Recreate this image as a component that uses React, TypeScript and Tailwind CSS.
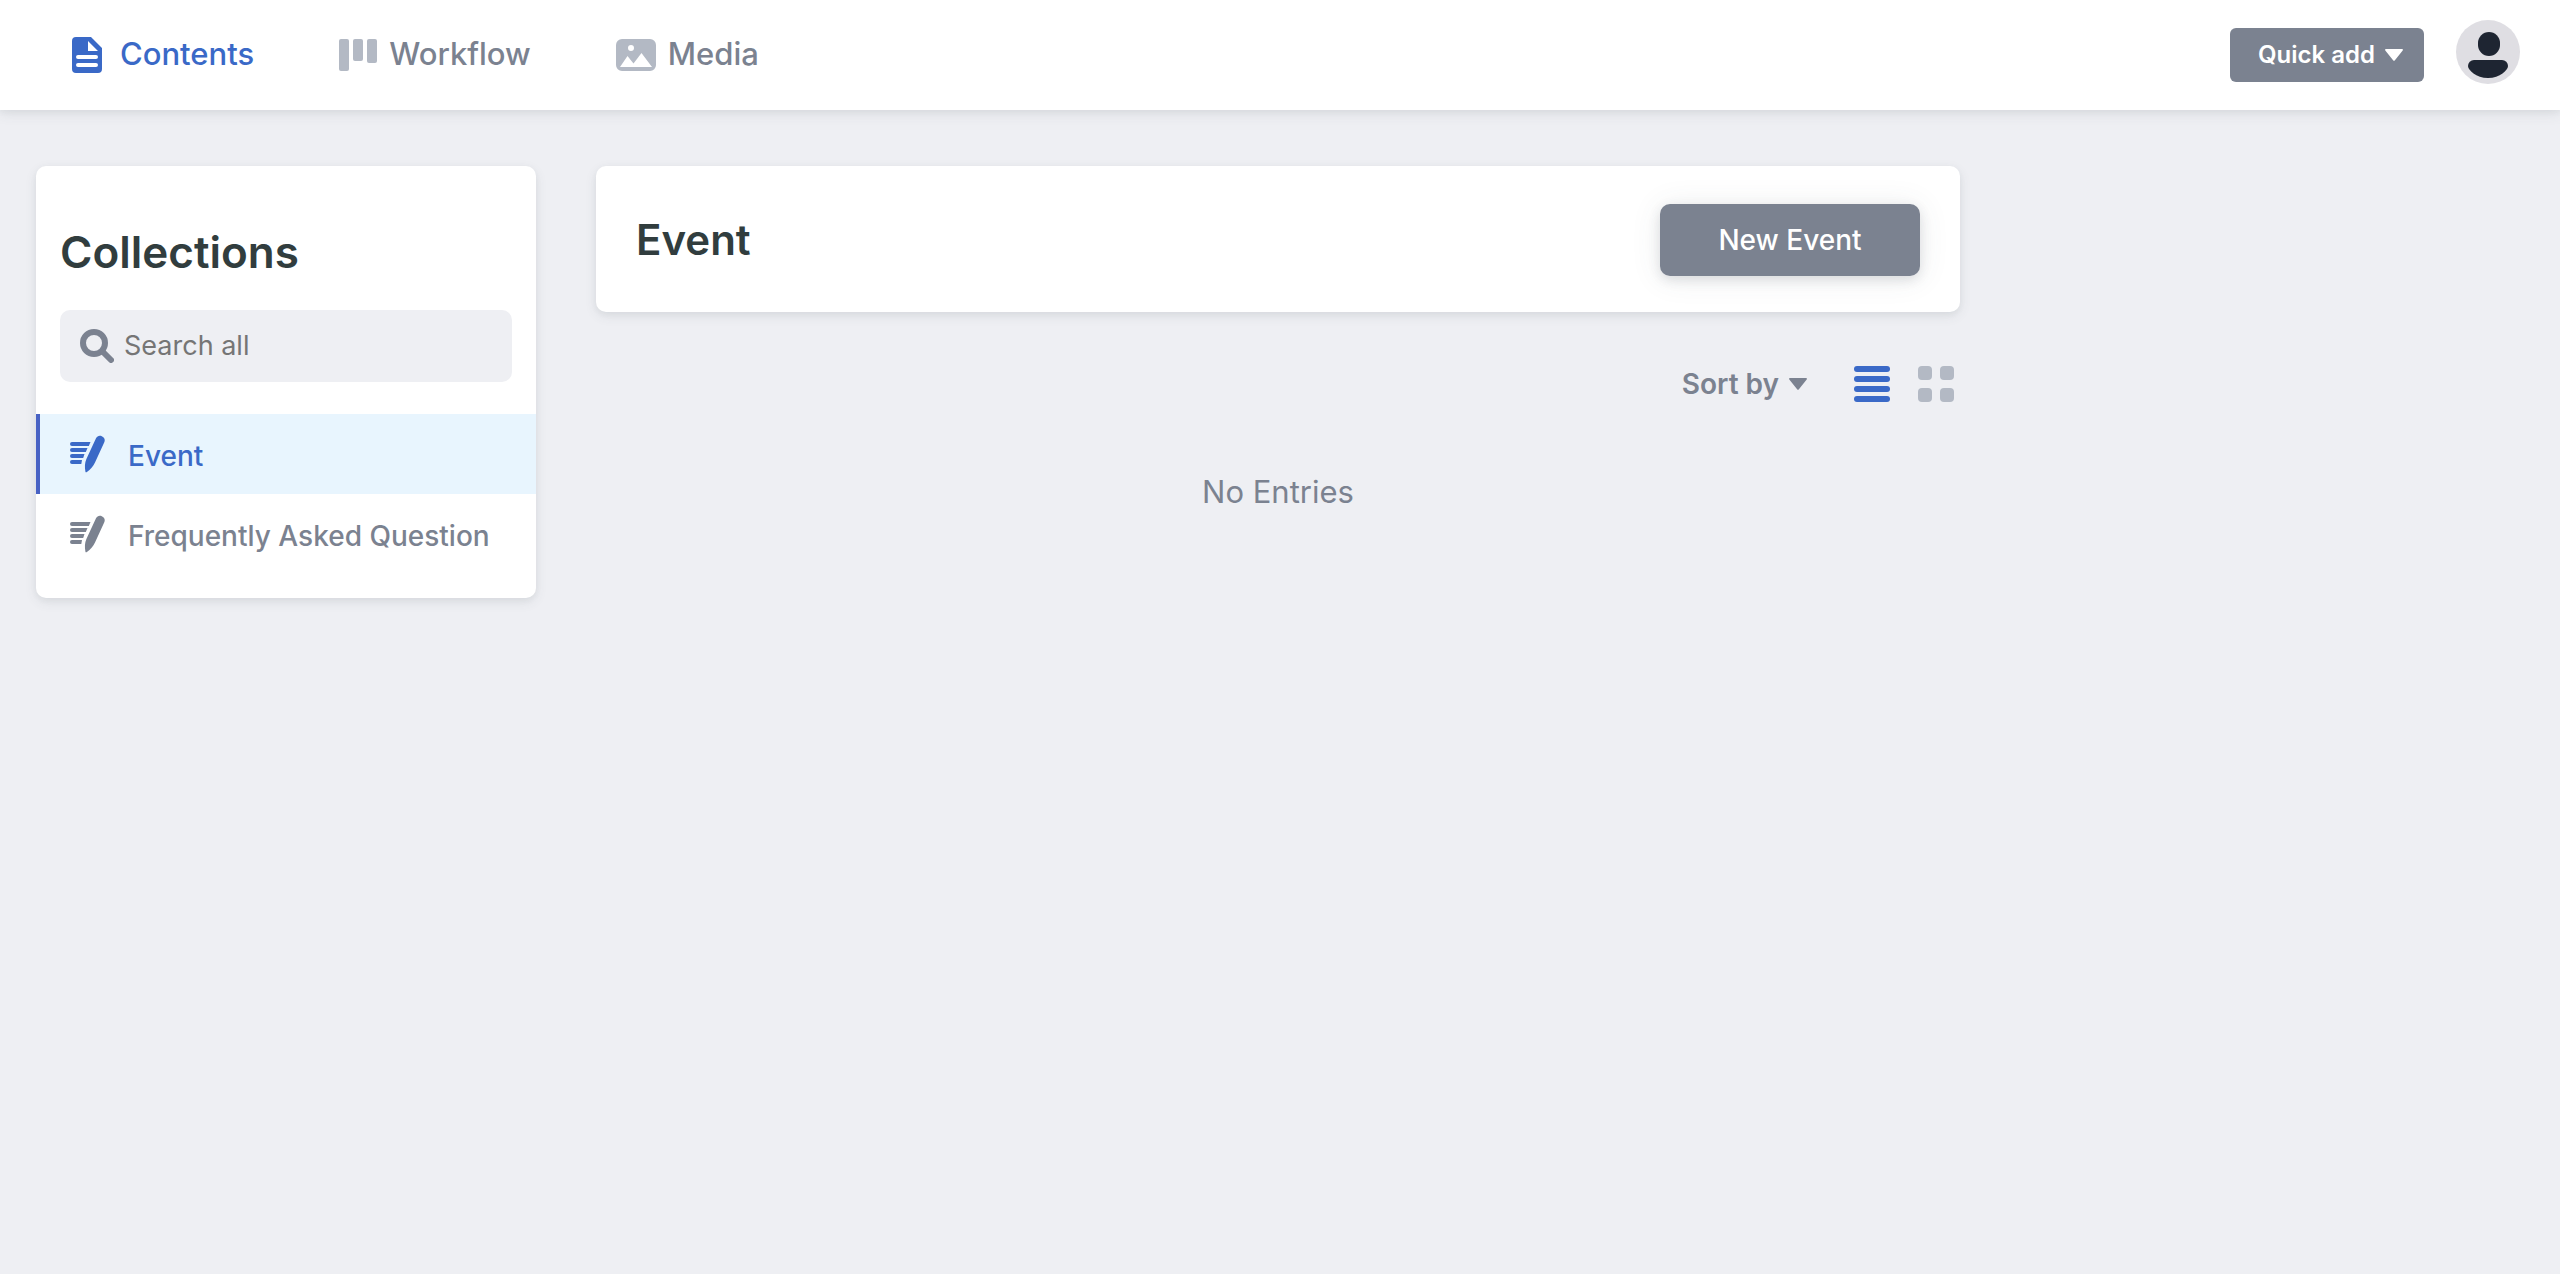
import { ReactNode } from 'react';

const font = "font-['Inter','Liberation_Sans',sans-serif]";

function ContentsIcon() {
  return (
    <svg width="30" height="36" viewBox="0 0 30 36" fill="currentColor" aria-hidden="true">
      <path fillRule="evenodd" d="M4 0h15l11 11v21a4 4 0 0 1-4 4H4a4 4 0 0 1-4-4V4a4 4 0 0 1 4-4zM16 4v10h10zM6 18a2 2 0 0 0 0 4h18a2 2 0 0 0 0-4zM6 26a2 2 0 0 0 0 4h18a2 2 0 0 0 0-4z" />
    </svg>
  );
}

function WorkflowIcon() {
  return (
    <svg width="38" height="32" viewBox="0 0 38 32" fill="currentColor" aria-hidden="true">
      <rect width="10" height="32" rx="2" />
      <rect x="14" width="10" height="22" rx="2" />
      <rect x="28" width="10" height="24" rx="2" />
    </svg>
  );
}

function MediaIcon() {
  return (
    <svg width="40" height="32" viewBox="0 0 40 32" fill="currentColor" aria-hidden="true">
      <path fillRule="evenodd" d="M6 0h28a6 6 0 0 1 6 6v20a6 6 0 0 1-6 6H6a6 6 0 0 1-6-6V6a6 6 0 0 1 6-6zM4 28h32L25.500 14l-8 10.500L11.500 17zM15 6a3 3 0 1 0 0 6a3 3 0 0 0 0-6z" />
    </svg>
  );
}

function WriteIcon() {
  return (
    <svg width="36" height="38" viewBox="0 0 36 38" fill="currentColor" aria-hidden="true">
      <path d="M2 7h18.500l-1.700 4H2a2 2 0 0 1 0-4zM2 13h15.500l-1.700 4H2a2 2 0 0 1 0-4zM2 19h12.500l-1.300 4H2a2 2 0 0 1 0-4zM2 25h10l-.700 4H2a2 2 0 0 1 0-4z" />
      <path d="M26 3.300c1.200-2.500 3.600-3.100 5.800-2.100s3.700 3.200 2.600 5.800L25 27.500c-1.800 3.900-4.500 7-8.100 9.500c-.800.500-1.400.300-1.500-.600c-.800-4.500-.700-8.600 1-12.500z" />
    </svg>
  );
}

function SearchIcon() {
  return (
    <svg width="34" height="34" viewBox="0 0 34 34" fill="none" stroke="currentColor" strokeWidth="6" aria-hidden="true">
      <circle cx="14" cy="14" r="11" />
      <path d="M23 23l8 8" strokeLinecap="round" />
    </svg>
  );
}

function Caret() {
  return (
    <svg width="18" height="12" viewBox="0 0 18 12" fill="currentColor" aria-hidden="true">
      <path d="M1 0h16c1 0 1.200.800.700 1.400l-8 10a1 1 0 0 1-1.400 0l-8-10C-.200.800 0 0 1 0z" />
    </svg>
  );
}

function Avatar() {
  return (
    <svg width="64" height="64" viewBox="0 0 64 64" aria-hidden="true">
      <circle cx="32" cy="32" r="32" fill="#dfdee3" />
      <rect x="22" y="12" width="22" height="24" rx="11" fill="#1e2532" />
      <path d="M18 40h28a6 6 0 0 1 6 6c0 4-8 12-20 12s-20-8-20-12a6 6 0 0 1 6-6z" fill="#1e2532" />
    </svg>
  );
}

function NavTab({ icon, label, active = false }: { icon: ReactNode; label: string; active?: boolean }) {
  return (
    <a href="#" className={active ? 'flex items-center gap-[18px] text-[#3a69c7]' : 'flex items-center gap-3 text-[#7b8290]'}>
      <span className={active ? '' : 'text-[#b3b9c4]'}>{icon}</span>
      {label}
    </a>
  );
}

function CollectionLink({ label, active = false }: { label: string; active?: boolean }) {
  return (
    <li>
      <a
        href="#"
        className={
          active
            ? 'flex h-20 items-center gap-[22px] border-l-4 border-[#4862c4] bg-[#e8f5fe] pl-[30px] text-[#3a69c7]'
            : 'flex h-20 items-center gap-[22px] border-l-4 border-transparent pl-[30px] text-[#7b8290]'
        }
      >
        <WriteIcon />
        <span className="pt-1">{label}</span>
      </a>
    </li>
  );
}

const cardShadow = 'shadow-[0_4px_12px_0_rgba(68,74,87,0.10),0_2px_6px_0_rgba(68,74,87,0.05)]';

export default function App() {
  return (
    <div className={`min-h-screen bg-[#eeeff3] ${font}`}>
      <header className="flex h-[110px] items-center justify-between bg-white pr-10 pl-[72px] shadow-[0_4px_12px_0_rgba(68,74,87,0.10),0_2px_6px_0_rgba(68,74,87,0.05)]">
        <nav className="flex items-center gap-[85px] pb-px text-[31px] font-medium">
          <NavTab active icon={<ContentsIcon />} label="Contents" />
          <NavTab icon={<WorkflowIcon />} label="Workflow" />
          <NavTab icon={<MediaIcon />} label="Media" />
        </nav>
        <div className="flex items-start gap-8 pb-1.5">
          <button className="mt-2 flex h-[54px] items-center gap-2.5 rounded-md bg-[#7b8290] pr-[21px] pl-7 text-[24px] font-semibold text-white">
            Quick add
            <Caret />
          </button>
          <button aria-label="Account">
            <Avatar />
          </button>
        </div>
      </header>

      <div className="flex items-start gap-[60px] px-9 pt-14">
        <aside className={`w-[500px] shrink-0 rounded-[10px] bg-white pb-6 ${cardShadow}`}>
          <h2 className="px-6 pt-14 text-[44px] leading-[60px] font-semibold text-[#313d3e]">Collections</h2>
          <label className="mx-6 mt-7 flex h-[72px] items-center gap-2.5 rounded-[10px] bg-[#eeeff3] px-5 text-[#7b8290]">
            <SearchIcon />
            <input
              type="search"
              aria-label="Search all"
              placeholder="Search all"
              className="min-w-0 flex-1 bg-transparent text-[27px] outline-none placeholder:text-[#757575]"
            />
          </label>
          <ul className="mt-8 text-[28px] font-medium">
            <CollectionLink active label="Event" />
            <CollectionLink label="Frequently Asked Question" />
          </ul>
        </aside>

        <main className="max-w-[1364px] flex-1">
          <div className={`flex items-start justify-between rounded-[10px] bg-white px-10 pt-[38px] pb-9 ${cardShadow}`}>
            <h1 className="pt-1.5 text-[42px] leading-[60px] font-semibold text-[#313d3e]">Event</h1>
            <button className="h-[72px] w-[260px] rounded-[10px] bg-[#7b8290] text-[28px] font-medium text-white shadow-[0_4px_12px_0_rgba(68,74,87,0.15),0_2px_30px_0_rgba(68,74,87,0.10)]">
              New Event
            </button>
          </div>
          <div className="mt-[54px] flex h-9 items-center justify-end pr-1.5">
            <button className="flex items-center gap-2.5 text-[28px] font-semibold text-[#7b8290]">
              Sort by
              <Caret />
            </button>
            <button aria-label="List view" className="ml-[47px] flex w-9 flex-col gap-1">
              <span className="h-1.5 w-full rounded-[3px] bg-[#3a69c7]" />
              <span className="h-1.5 w-full rounded-[3px] bg-[#3a69c7]" />
              <span className="h-1.5 w-full rounded-[3px] bg-[#3a69c7]" />
              <span className="h-1.5 w-full rounded-[3px] bg-[#3a69c7]" />
            </button>
            <button aria-label="Grid view" className="ml-7 grid grid-cols-2 gap-2">
              <span className="size-3.5 rounded bg-[#b3b9c4]" />
              <span className="size-3.5 rounded bg-[#b3b9c4]" />
              <span className="size-3.5 rounded bg-[#b3b9c4]" />
              <span className="size-3.5 rounded bg-[#b3b9c4]" />
            </button>
          </div>
          <p className="mt-[70px] text-center text-[31px] leading-10 text-[#7b8290]">No Entries</p>
        </main>
      </div>
    </div>
  );
}
